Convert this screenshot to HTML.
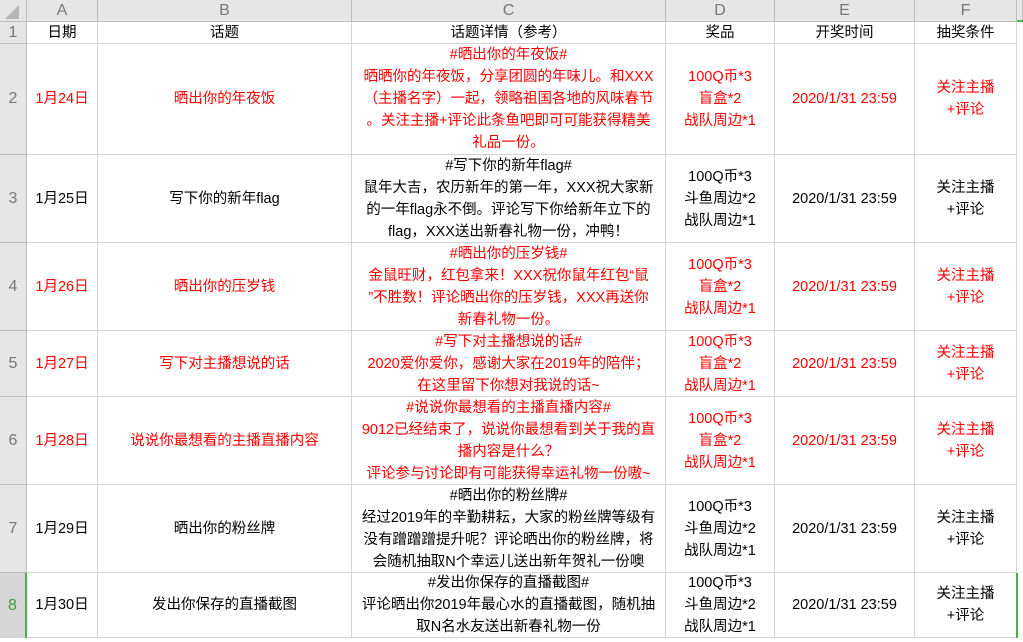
<!DOCTYPE html>
<html><head><meta charset="utf-8"><style>
body{margin:0;width:1023px;height:642px;overflow:hidden;background:#fff;font-family:"Liberation Sans","Noto Sans CJK SC",sans-serif;font-size:14.5px;color:#000}
.c{position:absolute;display:flex;align-items:center;justify-content:center;text-align:center;line-height:22px;box-sizing:border-box;border-right:1px solid #d4d4d4;border-bottom:1px solid #d4d4d4}
.h{background:#e6e6e6;color:#777;font-size:16px;border-color:#bdbdbd}
.r{color:#ff0000}
</style></head><body>
<div id="g"></div>
<script>
const cols=[0,27,98,352,666,775,915,1017];
const rows=[0,22,44,155,243,331,397,485,573,638];
const hdr=["","A","B","C","D","E","F"];
const data=[
["日期","话题","话题详情（参考）","奖品","开奖时间","抽奖条件",0],
["1月24日","晒出你的年夜饭","#晒出你的年夜饭#<br>晒晒你的年夜饭，分享团圆的年味儿。和XXX<br>（主播名字）一起，领略祖国各地的风味春节<br>。关注主播+评论此条鱼吧即可可能获得精美<br>礼品一份。","100Q币*3<br>盲盒*2<br>战队周边*1","2020/1/31 23:59","关注主播<br>+评论",1],
["1月25日","写下你的新年flag","#写下你的新年flag#<br>鼠年大吉，农历新年的第一年，XXX祝大家新<br>的一年flag永不倒。评论写下你给新年立下的<br>flag，XXX送出新春礼物一份，冲鸭！","100Q币*3<br>斗鱼周边*2<br>战队周边*1","2020/1/31 23:59","关注主播<br>+评论",0],
["1月26日","晒出你的压岁钱","#晒出你的压岁钱#<br>金鼠旺财，红包拿来！XXX祝你鼠年红包“鼠<br>”不胜数！评论晒出你的压岁钱，XXX再送你<br>新春礼物一份。","100Q币*3<br>盲盒*2<br>战队周边*1","2020/1/31 23:59","关注主播<br>+评论",1],
["1月27日","写下对主播想说的话","#写下对主播想说的话#<br>2020爱你爱你，感谢大家在2019年的陪伴；<br>在这里留下你想对我说的话~","100Q币*3<br>盲盒*2<br>战队周边*1","2020/1/31 23:59","关注主播<br>+评论",1],
["1月28日","说说你最想看的主播直播内容","#说说你最想看的主播直播内容#<br>9012已经结束了，说说你最想看到关于我的直<br>播内容是什么？<br>评论参与讨论即有可能获得幸运礼物一份嗷~","100Q币*3<br>盲盒*2<br>战队周边*1","2020/1/31 23:59","关注主播<br>+评论",1],
["1月29日","晒出你的粉丝牌","#晒出你的粉丝牌#<br>经过2019年的辛勤耕耘，大家的粉丝牌等级有<br>没有蹭蹭蹭提升呢？评论晒出你的粉丝牌，将<br>会随机抽取N个幸运儿送出新年贺礼一份噢","100Q币*3<br>斗鱼周边*2<br>战队周边*1","2020/1/31 23:59","关注主播<br>+评论",0],
["1月30日","发出你保存的直播截图","#发出你保存的直播截图#<br>评论晒出你2019年最心水的直播截图，随机抽<br>取N名水友送出新春礼物一份","100Q币*3<br>斗鱼周边*2<br>战队周边*1","2020/1/31 23:59","关注主播<br>+评论",0]];
let h="";
function cell(x0,x1,y0,y1,cls,t){h+=`<div class="c ${cls}" style="left:${x0}px;top:${y0}px;width:${x1-x0}px;height:${y1-y0}px">${t}</div>`;}
for(let i=0;i<7;i++)cell(cols[i],cols[i+1],0,22,"h",hdr[i]);
cell(1017,1023,0,22,"h","");
h+=`<div style="position:absolute;left:5px;top:5px;width:0;height:0;border-left:14px solid transparent;border-bottom:14px solid #b4b4b4"></div>`;
for(let r=0;r<8;r++){
 const y0=rows[r+1],y1=rows[r+2];
 cell(0,27,y0,y1,"h",String(r+1));
 const d=data[r];
 for(let c=0;c<6;c++)cell(cols[c+1],cols[c+2],y0,y1,d[6]?"r":"",d[c]);
}
h+=`<div style="position:absolute;left:0;top:573px;width:27px;height:65px;background:#d6d6d6;display:flex;align-items:center;justify-content:center;color:#3c9a3c;font-size:16px;border-right:2px solid #4caf50;box-sizing:border-box">8</div>`;
h+=`<div style="position:absolute;left:1016px;top:573px;width:2px;height:65px;background:#4caf50"></div>`;
h+=`<div style="position:absolute;left:1017px;top:20px;width:6px;height:2px;background:#4caf50"></div>`;
document.getElementById("g").innerHTML=h;
</script>
</body></html>
